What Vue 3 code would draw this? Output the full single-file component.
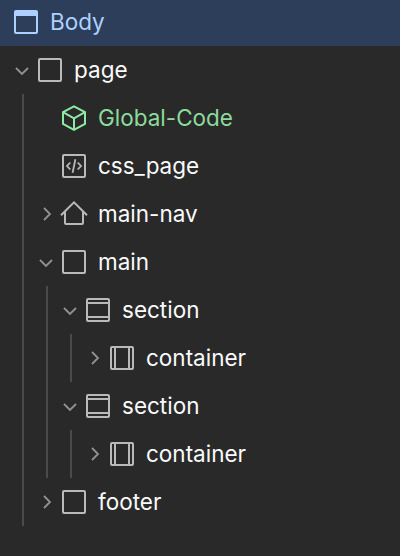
<script setup>
const rows = [
  { label: 'page', depth: 0, icon: 'box', arrow: 'down' },
  { label: 'Global-Code', depth: 1, icon: 'cube', tone: 'green' },
  { label: 'css_page', depth: 1, icon: 'code' },
  { label: 'main-nav', depth: 1, icon: 'home', arrow: 'right' },
  { label: 'main', depth: 1, icon: 'box', arrow: 'down' },
  { label: 'section', depth: 2, icon: 'section', arrow: 'down' },
  { label: 'container', depth: 3, icon: 'container', arrow: 'right' },
  { label: 'section', depth: 2, icon: 'section', arrow: 'down' },
  { label: 'container', depth: 3, icon: 'container', arrow: 'right' },
  { label: 'footer', depth: 1, icon: 'box', arrow: 'right' },
]
</script>

<template>
  <div class="navigator">
    <div class="root-row">
      <svg class="icon" viewBox="0 0 24 24">
        <rect x="1" y="1" width="22" height="22" rx="1" />
        <path class="solid" d="M1 1h22v5H1z" />
      </svg>
      <span class="label">Body</span>
    </div>
    <div v-for="(row, i) in rows" :key="i" class="row" :class="row.tone">
      <span v-for="g in row.depth" :key="g" class="guide"></span>
      <span class="toggle">
        <svg v-if="row.arrow === 'down'" class="arrow" viewBox="0 0 24 24"><path d="M6 10l6 6 6-6" /></svg>
        <svg v-if="row.arrow === 'right'" class="arrow" viewBox="0 0 24 24"><path d="M10 6l6 6-6 6" /></svg>
      </span>
      <svg class="icon" viewBox="0 0 24 24">
        <template v-if="row.icon === 'cube'">
          <path d="M12 0.4L23 6.2V17.8L12 23.9L1 17.8V6.2Z" />
          <path d="M1 6.2L12 12.3L23 6.2M12 12.3V23.9" />
        </template>
        <template v-else-if="row.icon === 'home'">
          <path d="M-1 13.2L12 0.3L25 13.2" />
          <path d="M3 9.7V21a1 1 0 0 0 1 1H20a1 1 0 0 0 1-1V9.7" />
        </template>
        <template v-else>
          <rect x="1" y="1" width="22" height="22" rx="1" />
          <path v-if="row.icon === 'section'" d="M1 5H23M1 19H23" />
          <path v-if="row.icon === 'container'" d="M5 1V23M19 1V23" />
          <path v-if="row.icon === 'code'" class="thin" d="M8.3 8.5L5 12L8.3 15.5M15.7 8.5L19 12L15.7 15.5M13.4 5.2L10.6 18.8" />
        </template>
      </svg>
      <span class="label">{{ row.label }}</span>
    </div>
  </div>
</template>

<style>
body {
  margin: 0;
  background: #292929;
}
</style>

<style scoped>
.navigator {
  height: 556px;
  overflow: hidden;
  background: #292929;
  color: #fafafa;
  font-family: Inter, "Liberation Sans", sans-serif;
  font-size: 22.5px;
  line-height: 32px;
}
.root-row {
  display: flex;
  align-items: center;
  box-sizing: border-box;
  height: 46px;
  padding: 0 14px 2px;
  background: #2d3e5a;
  color: #aed0ff;
}
.row {
  display: flex;
  align-items: center;
  height: 48px;
  padding-left: 22px;
}
.guide {
  flex: none;
  box-sizing: border-box;
  width: 24px;
  height: 48px;
  border-left: 2px solid #4b4b4b;
}
.toggle {
  flex: none;
  display: flex;
  width: 24px;
  height: 24px;
  margin: 0 4px 0 -12px;
}
.arrow,
.icon {
  flex: none;
  width: 24px;
  height: 24px;
  overflow: visible;
  fill: none;
  stroke: #b9b9b9;
  stroke-width: 2;
}
.arrow {
  stroke: #929292;
  stroke-width: 1.8;
}
.root-row .icon {
  stroke: #aed0ff;
}
.root-row .solid {
  fill: #aed0ff;
  stroke: none;
}
.icon .thin {
  stroke-width: 1.8;
}
.label {
  margin-left: 12px;
  white-space: nowrap;
}
.green {
  color: #8bdc9b;
}
.green .icon {
  stroke: #8ee9a2;
}
</style>
